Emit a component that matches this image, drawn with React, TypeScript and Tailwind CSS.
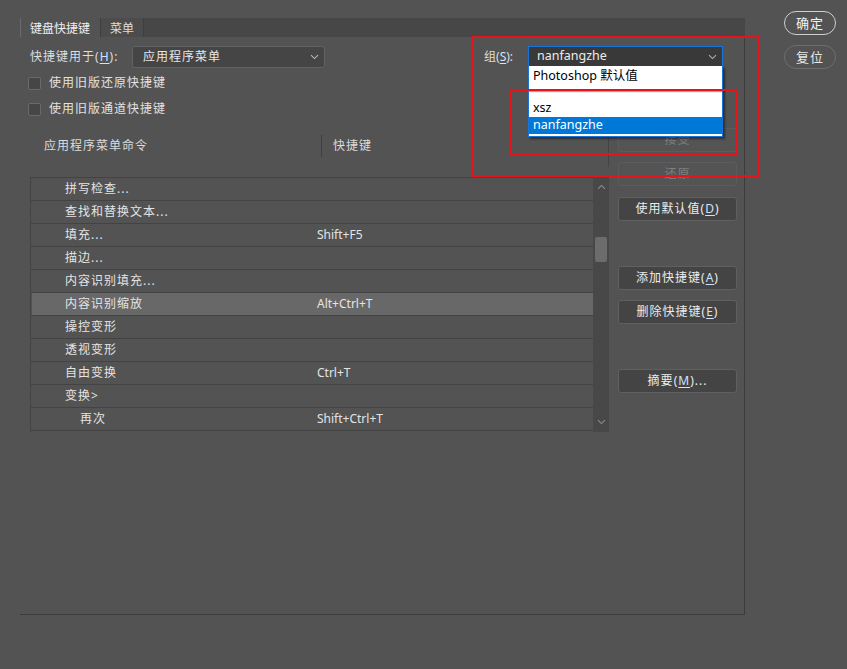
import React from "react";

const FONT = "font-['Noto_Sans','Noto_Sans_CJK_SC',sans-serif]";

function ChevronDown({ className = "" }: { className?: string }) {
  return (
    <svg width="9" height="6" viewBox="0 0 9 6" className={className}>
      <path d="M1 1.2 L4.5 4.6 L8 1.2" fill="none" stroke="currentColor" strokeWidth="1.1" />
    </svg>
  );
}
function ChevronUp({ className = "" }: { className?: string }) {
  return (
    <svg width="9" height="6" viewBox="0 0 9 6" className={className}>
      <path d="M1 4.8 L4.5 1.4 L8 4.8" fill="none" stroke="currentColor" strokeWidth="1.1" />
    </svg>
  );
}

function M({ c }: { c: string }) {
  return (
    <>
      (<span className="underline underline-offset-2 text-[#cfe3ff]">{c}</span>)
    </>
  );
}

const rows: { t: string; k: string; hl?: boolean; indent?: boolean }[] = [
  { t: "拼写检查...", k: "" },
  { t: "查找和替换文本...", k: "" },
  { t: "填充...", k: "Shift+F5" },
  { t: "描边...", k: "" },
  { t: "内容识别填充...", k: "" },
  { t: "内容识别缩放", k: "Alt+Ctrl+T", hl: true },
  { t: "操控变形", k: "" },
  { t: "透视变形", k: "" },
  { t: "自由变换", k: "Ctrl+T" },
  { t: "变换>", k: "" },
  { t: "再次", k: "Shift+Ctrl+T", indent: true },
];

function SideButton({
  children,
  disabled,
  className = "",
}: {
  children: React.ReactNode;
  disabled?: boolean;
  className?: string;
}) {
  return (
    <div
      className={
        "w-[119px] h-[24px] rounded-[3px] border flex items-center justify-center text-[12px] tracking-[1px] " +
        (disabled
          ? "border-[#5c5c5c] bg-[#545454] text-[#7e7e7e] "
          : "border-[#606060] bg-[#444444] text-[#ececec] ") +
        className
      }
    >
      {children}
    </div>
  );
}

export default function App() {
  return (
    <div
      className={
        "relative w-[847px] h-[669px] overflow-hidden bg-[#535353] text-[#e2e2e2] text-[12px] leading-none flex " +
        FONT
      }
    >
      {/* Left: tabs + panel */}
      <div className="pl-[20px] pt-[18px] flex flex-col w-[745px]">
        {/* tab strip */}
        <div className="h-[19px] bg-[#474747] flex items-stretch">
          <div className="w-[80px] bg-[#535353] border-l border-[#6a6a6a] flex items-center pl-[9px] text-[#f0f0f0] pt-[2px]">
            键盘快捷键
          </div>
          <div className="w-[44px] bg-[#4c4c4c] border-l border-r border-[#3e3e3e] flex items-center pl-[9px] text-[#dcdcdc] pt-[2px]">
            菜单
          </div>
        </div>

        {/* panel */}
        <div className="h-[578px] w-[725px] border-r border-b border-[#3c3c3c] flex flex-col pl-[10px]">
          {/* Row A */}
          <div className="mt-[9px] h-[21px] flex items-center">
            <div className="w-[102px] tracking-[1px] text-[#dedede]">
              快捷键用于<M c="H" />:
            </div>
            <div className="w-[193px] h-[22px] rounded-[3px] border border-[#626262] bg-[#454545] flex items-center justify-between pl-[10px] pr-[5px]">
              <span className="tracking-[1px] text-[#e8e8e8]">应用程序菜单</span>
              <ChevronDown className="text-[#b8b8b8]" />
            </div>
            <div className="ml-[159px] w-[44px] text-[#dedede]">
              组<M c="S" />:
            </div>
            <div className="w-[195px] h-[21px] border border-[#1a73d9] bg-[#393939] flex items-center justify-between pl-[8px] pr-[5px]">
              <span className="text-[#ececec] text-[12.5px]">nanfangzhe</span>
              <ChevronDown className="text-[#b0b0b0]" />
            </div>
          </div>

          {/* checkboxes */}
          <div className="mt-[7px] h-[18px] flex items-center -ml-[2px]">
            <div className="w-[13px] h-[13px] rounded-[2px] border border-[#6a6a6a] bg-[#464646]" />
            <span className="ml-[8px] tracking-[1px]">使用旧版还原快捷键</span>
          </div>
          <div className="mt-[8px] h-[18px] flex items-center -ml-[2px]">
            <div className="w-[13px] h-[13px] rounded-[2px] border border-[#6a6a6a] bg-[#464646]" />
            <span className="ml-[8px] tracking-[1px]">使用旧版通道快捷键</span>
          </div>

          {/* bottom area */}
          <div className="mt-[4px] flex">
            {/* left column */}
            <div className="w-[579px] flex flex-col">
              <div className="h-[45px] border-r border-[#444444] pt-[13px]">
                <div className="h-[22px] flex items-center">
                  <span className="w-[291px] pl-[14px] tracking-[1px] text-[#dcdcdc]">应用程序菜单命令</span>
                  <div className="w-px h-[22px] bg-[#3f3f3f]" />
                  <span className="pl-[11px] tracking-[1px] text-[#dcdcdc]">快捷键</span>
                </div>
              </div>
              <div className="mt-[10px] flex">
                <div className="w-[563px] border-t border-l border-[#434343] flex flex-col">
                  {rows.map((r, i) => (
                    <div key={i} className="h-[23px] border-b border-[#434343] flex items-stretch">
                      <div
                        className={
                          "flex-1 flex items-center " +
                          (r.hl ? "bg-[#686868] ml-[1px] " : "")
                        }
                      >
                        <span
                          className={
                            "tracking-[1px] text-[#e4e4e4] " +
                            (r.hl
                              ? "w-[285px] pl-[33px]"
                              : r.indent
                              ? "w-[286px] pl-[49px]"
                              : "w-[286px] pl-[34px]")
                          }
                        >
                          {r.t}
                        </span>
                        <span className="text-[#e4e4e4]">{r.k}</span>
                      </div>
                    </div>
                  ))}
                </div>
                {/* scrollbar */}
                <div className="w-[16px] h-[255px] bg-[#484848] flex flex-col items-center">
                  <ChevronUp className="mt-[7px] text-[#8c8c8c]" />
                  <div className="mt-[47px] w-[12px] h-[25px] rounded-[2px] bg-[#6c6c6c]" />
                  <div className="flex-1" />
                  <ChevronDown className="mb-[7px] text-[#8c8c8c]" />
                </div>
              </div>
            </div>

            {/* right column buttons */}
            <div className="ml-[9px] mt-[6px] flex flex-col">
              <SideButton disabled>接受</SideButton>
              <SideButton disabled className="mt-[10px]">还原</SideButton>
              <SideButton className="mt-[11px]">
                使用默认值<M c="D" />
              </SideButton>
              <SideButton className="mt-[45px]">
                添加快捷键<M c="A" />
              </SideButton>
              <SideButton className="mt-[10px]">
                删除快捷键<M c="E" />
              </SideButton>
              <SideButton className="mt-[45px]">
                摘要<M c="M" />...
              </SideButton>
            </div>
          </div>
        </div>
      </div>

      {/* right OK / reset */}
      <div className="ml-[39px] pt-[11px] flex flex-col">
        <div className="w-[52px] h-[24px] rounded-full border border-[#cfcfcf] flex items-center justify-center text-[13px] text-[#f2f2f2] tracking-[1px]">
          确定
        </div>
        <div className="mt-[10px] w-[52px] h-[24px] rounded-full border border-[#6e6e6e] flex items-center justify-center text-[13px] text-[#e6e6e6] tracking-[1px]">
          复位
        </div>
      </div>

      {/* dropdown list overlay */}
      <div className="absolute left-[528px] top-[66px] w-[195px] h-[71px] bg-white border-l border-r border-b border-[#1a73d9] shadow-[2px_2px_2px_rgba(0,0,0,0.45)] flex flex-col text-black">
        <div className="h-[20px] flex items-center pl-[4px] text-[12.5px]">Photoshop 默认值</div>
        <div className="mt-[5px] h-px bg-[#a8a8a8]" />
        <div className="h-px bg-[#f0f0f0]" />
        <div className="mt-[7px] h-[17px] flex items-center pl-[4px] text-[12.5px]">xsz</div>
        <div className="h-[17px] bg-[#0078d7] text-white flex items-center pl-[4px] text-[12.5px]">nanfangzhe</div>
        <div className="flex-1 bg-white" />
      </div>

      {/* red annotation boxes */}
      <div className="absolute left-[472px] top-[36px] w-[287px] h-[141px] border-2 border-[#e8141c] pointer-events-none" />
      <div className="absolute left-[509px] top-[89px] w-[229px] h-[66px] border-2 border-[#e8141c] pointer-events-none" />
    </div>
  );
}
